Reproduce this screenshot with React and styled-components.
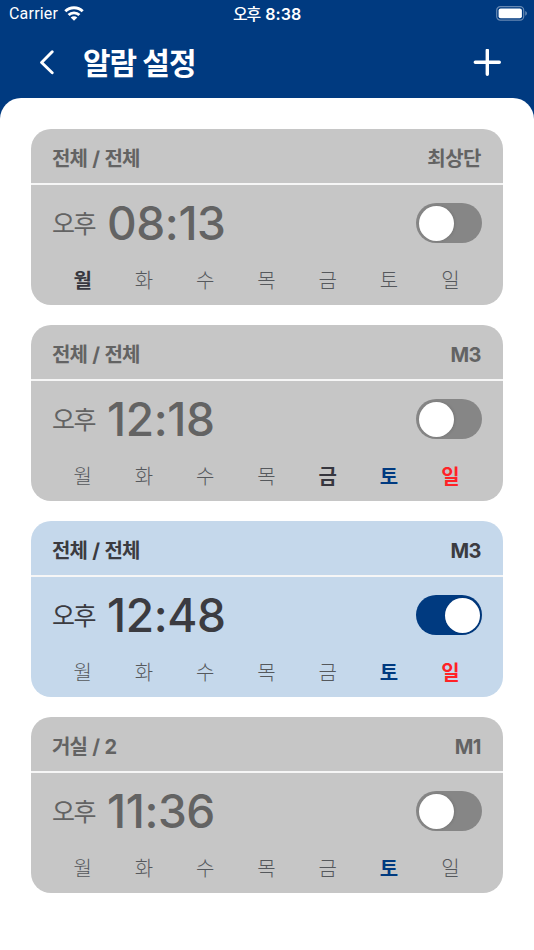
import { useState } from "react";
import styled, { createGlobalStyle } from "styled-components";

const DAYS = ["월", "화", "수", "목", "금", "토", "일"];

const ALARMS = [
  { id: 1, place: "전체 / 전체", mode: "최상단", meridiem: "오후", time: "08:13", days: ["월"], on: false },
  { id: 2, place: "전체 / 전체", mode: "M3", meridiem: "오후", time: "12:18", days: ["금", "토", "일"], on: false },
  { id: 3, place: "전체 / 전체", mode: "M3", meridiem: "오후", time: "12:48", days: ["토", "일"], on: true },
  { id: 4, place: "거실 / 2", mode: "M1", meridiem: "오후", time: "11:36", days: ["토"], on: false },
];

const App = () => {
  const [alarms, setAlarms] = useState(ALARMS);

  const toggle = (id) => {
    setAlarms(alarms.map((a) => (a.id === id ? { ...a, on: !a.on } : a)));
  };

  return (
    <>
      <GlobalStyle />
      <Screen>
        <StatusBar>
          <Carrier>
            Carrier
            <WifiIcon />
          </Carrier>
          <Clock>
            <span>오후</span> 8:38
          </Clock>
          <BatteryIcon />
        </StatusBar>
        <Header>
          <IconBtn aria-label="뒤로">
            <svg width="16" height="26" viewBox="0 0 16 26" fill="none">
              <path d="M13.2 1.7L2.6 12.5L13.2 22.8" stroke="#fff" strokeWidth="2.9" strokeLinecap="round" strokeLinejoin="round" />
            </svg>
          </IconBtn>
          <Title>알람 설정</Title>
          <IconBtn aria-label="추가">
            <svg width="28" height="28" viewBox="0 0 28 28">
              <path d="M14.3 1.3V25.3M2.3 13.3H26.3" stroke="#fff" strokeWidth="3.4" strokeLinecap="round" />
            </svg>
          </IconBtn>
        </Header>
        <List>
          {alarms.map((alarm) => (
            <AlarmCard key={alarm.id} alarm={alarm} onToggle={() => toggle(alarm.id)} />
          ))}
        </List>
      </Screen>
    </>
  );
};

const AlarmCard = ({ alarm, onToggle }) => {
  const { place, mode, meridiem, time, days, on } = alarm;
  return (
    <Card $on={on}>
      <CardTop>
        <Place>{place}</Place>
        <span>{mode}</span>
      </CardTop>
      <CardBody>
        <TimeRow>
          <Meridiem>{meridiem}</Meridiem>
          <Time>{time}</Time>
          <Switch role="switch" aria-checked={on} $on={on} onClick={onToggle}>
            <Knob />
          </Switch>
        </TimeRow>
        <Week>
          {DAYS.map((day) => (
            <Day key={day} $day={day} $active={days.includes(day)}>
              {day}
            </Day>
          ))}
        </Week>
      </CardBody>
    </Card>
  );
};

const WifiIcon = () => (
  <svg width="20" height="15" viewBox="0 0 20 15" fill="none" stroke="#fff" strokeWidth="2.9">
    <path d="M1.3 5.2C6 0.6 14 0.6 18.7 5.2" />
    <path d="M4.6 9C7.4 6.2 12.6 6.2 15.4 9" />
    <path d="M10 14.8L6.7 11.5C8.5 9.9 11.5 9.9 13.3 11.5Z" fill="#fff" stroke="none" />
  </svg>
);

const BatteryIcon = () => (
  <svg width="32" height="15" viewBox="0 0 32 15">
    <rect x="0.7" y="0.7" width="27" height="13.4" rx="3.6" fill="none" stroke="#fff" strokeOpacity="0.4" strokeWidth="1.2" />
    <rect x="2.6" y="2.5" width="23.3" height="9.8" rx="2" fill="#fff" />
    <path d="M29.3 5.1C31.3 5.9 31.3 8.9 29.3 9.7Z" fill="#fff" fillOpacity="0.45" />
  </svg>
);

const GlobalStyle = createGlobalStyle`
  * {
    box-sizing: border-box;
  }
  body {
    margin: 0;
    background-color: #003a80;
    font-family: Inter, "Noto Sans CJK KR", sans-serif;
  }
  button {
    padding: 0;
    border: none;
    background: none;
    cursor: pointer;
  }
`;

const Screen = styled.div`
  display: flex;
  flex-direction: column;
  width: 534px;
  height: 950px;
  overflow: hidden;
  color: #fff;
  background-color: #003a80;
`;

const StatusBar = styled.div`
  display: grid;
  grid-template-columns: 1fr auto 1fr;
  align-items: center;
  height: 27px;
  padding: 0 6px 0 9px;
  font-size: 16px;
  line-height: 27px;

  > :last-child {
    justify-self: end;
  }
`;

const Carrier = styled.div`
  display: flex;
  align-items: center;
  gap: 6px;
  font-family: Roboto, sans-serif;
  letter-spacing: 0.2px;
`;

const Clock = styled.div`
  padding: 1px 3px 0 0;
  font-weight: 600;
  font-size: 16px;
  line-height: 26px;
  white-space: pre;
  word-spacing: 1px;

  span {
    font-weight: 500;
    letter-spacing: -1px;
  }
`;

const Header = styled.header`
  display: flex;
  align-items: center;
  height: 71px;
  padding: 0 33px 0 39px;
`;

const IconBtn = styled.button`
  display: flex;
`;

const Title = styled.h1`
  flex: 1;
  margin: 0 0 0 28px;
  font-size: 30px;
  font-weight: 700;
  line-height: 40px;
  letter-spacing: -1px;
`;

const List = styled.main`
  flex: 1;
  display: flex;
  flex-direction: column;
  gap: 20px;
  padding: 31px;
  border-radius: 21px 21px 0 0;
  background-color: #fff;
`;

const Card = styled.section`
  flex: none;
  height: 176px;
  border-radius: 20px;
  color: ${(props) => (props.$on ? "#3b3b40" : "#636363")};
  background-color: ${(props) => (props.$on ? "#c5d8eb" : "#c6c6c6")};
`;

const CardTop = styled.div`
  display: flex;
  align-items: center;
  justify-content: space-between;
  height: 56px;
  padding: 5px 22px 0 21px;
  border-bottom: 2px solid #f6f6f6;
  font-size: 20px;
  font-weight: 700;
  line-height: 28px;
  letter-spacing: -0.5px;
`;

const Place = styled.span`
  letter-spacing: -0.8px;
  word-spacing: 1.2px;
`;

const CardBody = styled.div`
  padding: 12px 21px 0;
`;

const TimeRow = styled.div`
  display: flex;
  align-items: center;
  height: 52px;
`;

const Meridiem = styled.span`
  width: 55px;
  padding-top: 2px;
  font-size: 25px;
  line-height: 36px;
  letter-spacing: -1.5px;
`;

const Time = styled.span`
  flex: 1;
  font-size: 46px;
  font-weight: 500;
  line-height: 52px;
  letter-spacing: -0.4px;
`;

const Switch = styled.button`
  display: flex;
  align-items: center;
  justify-content: ${(props) => (props.$on ? "flex-end" : "flex-start")};
  width: 66px;
  height: 40px;
  padding: 0 2px 0 2.5px;
  border-radius: 20px;
  background-color: ${(props) => (props.$on ? "#003a80" : "#868686")};
`;

const Knob = styled.span`
  width: 35px;
  height: 35px;
  border-radius: 50%;
  background-color: #fff;
  box-shadow: 1px 0 3px rgba(0, 0, 0, 0.12);
`;

const Week = styled.div`
  display: grid;
  grid-template-columns: repeat(7, 1fr);
  margin: 17px 1px 0 0;
`;

const dayColor = ({ $day, $active }) => {
  if (!$active) return "#55585c";
  if ($day === "토") return "#003a80";
  if ($day === "일") return "#ff2226";
  return "#36363e";
};

const Day = styled.span`
  text-align: center;
  font-size: 20px;
  line-height: 30px;
  font-weight: ${(props) => (props.$active ? 700 : 300)};
  color: ${dayColor};
`;

export default App;
